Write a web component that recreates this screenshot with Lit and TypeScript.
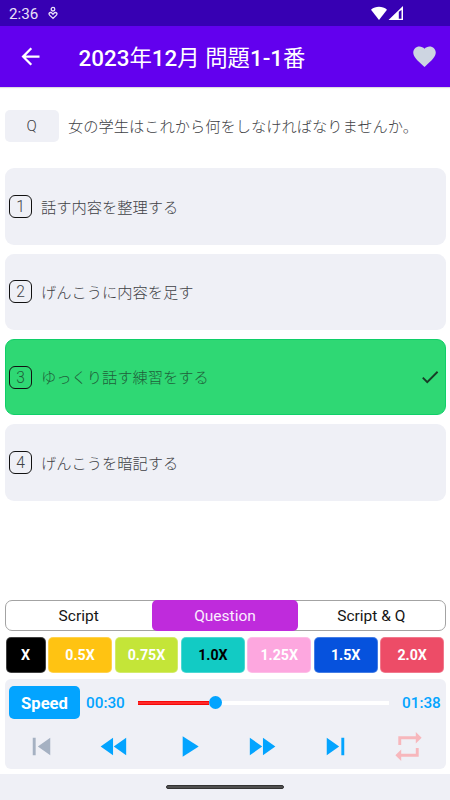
import { LitElement, html, css, svg } from "lit";
import { customElement, property, state } from "lit/decorators.js";
import { classMap } from "lit/directives/class-map.js";

const paths: Record<string, string> = {
  back: "M20 11H7.83l5.59-5.59L12 4l-8 8 8 8 1.41-1.41L7.83 13H20v-2z",
  heart:
    "M12 21.35l-1.45-1.32C5.4 15.36 2 12.28 2 8.5 2 5.42 4.42 3 7.5 3c1.74 0 3.41.81 4.5 2.09C13.09 3.81 14.76 3 16.5 3 19.58 3 22 5.42 22 8.5c0 3.78-3.4 6.86-8.55 11.54L12 21.35z",
  check: "M9 16.17L4.83 12l-1.42 1.41L9 19 21 7l-1.41-1.41z",
  prev: "M6 6h2v12H6zm3.5 6l8.5 6V6z",
  rewind: "M11 18V6l-8.5 6 8.5 6zm.5-6l8.5 6V6l-8.5 6z",
  play: "M8 5v14l11-7z",
  forward: "M4 18l8.5-6L4 6v12zm9-12v12l8.5-6L13 6z",
  next: "M6 18l8.5-6L6 6v12zM16 6v12h2V6h-2z",
  repeat:
    "M7 7h10v3l4-4-4-4v3H5v6h2V7zm10 10H7v-3l-4 4 4 4v-3h12v-6h-2v4z",
};

@customElement("app-icon")
class AppIcon extends LitElement {
  @property() name = "";
  static styles = css`
    :host { display: block; flex: none; }
    svg { display: block; width: 100%; height: 100%; fill: currentColor; }
  `;
  render() {
    return html`<svg viewBox="0 0 24 24">${svg`<path d=${paths[this.name] ?? ""}></path>`}</svg>`;
  }
}

@customElement("status-bar")
class StatusBar extends LitElement {
  static styles = css`
    :host {
      display: flex; align-items: center; height: 26px; box-sizing: border-box;
      padding: 0 46px 0 9px; background: #3700b3; color: #fff; flex: none;
    }
    .clock { font-size: 15.2px; line-height: 18px; padding-top: 2px; width: 31px; white-space: nowrap; color: #e9e2f8; }
    .person { width: 10px; height: 14px; margin-left: 8px; }
    .signals { width: 34px; height: 16px; margin-left: auto; }
    svg { display: block; }
  `;
  render() {
    return html`
      <span class="clock">2:36</span>
      <svg class="person" viewBox="0 0 10 14" fill="none" stroke="#e9e2f8" stroke-width="1.3">
        <circle cx="5" cy="3.2" r="1.8"></circle>
        <path d="M5 12.4L1.6 9.1C.3 7.6 1.5 6.3 2.8 6.5c1 .2 1.5 1 2.2 1.8.7-.8 1.2-1.6 2.2-1.8 1.3-.2 2.5 1.1 1.2 2.6z"></path>
      </svg>
      <svg class="signals" viewBox="0 0 34 16">
        <path fill="#fff" d="M1 4.7C5.6.9 12.4.9 17 4.7L9 15z"></path>
        <path fill="#fff" fill-rule="evenodd" d="M18.5 15L33 1v14zM28.8 6.7v7h2.7v-8.8z"></path>
      </svg>
    `;
  }
}

const options = ["話す内容を整理する", "げんこうに内容を足す", "ゆっくり話す練習をする", "げんこうを暗記する"];
const tabs = ["Script", "Question", "Script & Q"];
const speeds = [
  ["X", "black"], ["0.5X", "amber"], ["0.75X", "lime"], ["1.0X", "teal"],
  ["1.25X", "pink"], ["1.5X", "blue"], ["2.0X", "red"],
];

@customElement("app-root")
class AppRoot extends LitElement {
  @state() private tab = 1;
  @state() private selected = 2;

  static styles = css`
    :host {
      display: flex; flex-direction: column; width: 450px; height: 800px; overflow: hidden;
      background: #fff; font-family: Roboto, "Noto Sans CJK JP", sans-serif; color: #404145;
    }
    * { box-sizing: border-box; }
    .header {
      display: flex; align-items: center; height: 61px; flex: none; background: #6200ee; color: #fff;
      padding: 0 12.5px 0 16.5px; box-shadow: 0 1px 1px #dcdce0;
    }
    .back, .heart { width: 27px; height: 27px; }
    .heart { margin-left: auto; color: #cdd5e1; }
    .title { margin: 0 0 0 35px; font-size: 22.4px; font-weight: 500; line-height: 30px; white-space: nowrap; padding-top: 2px; }
    .title .kanji { font-weight: 400; }
    .question { display: flex; align-items: center; margin: 22.5px 4.5px 0; gap: 9px; height: 32.5px; flex: none; }
    .badge {
      width: 54.5px; height: 100%; border-radius: 5px; background: #eff0f6; flex: none;
      display: flex; align-items: center; justify-content: center; font-size: 15.2px; padding-top: 1px; font-weight: 300;
    }
    .prompt, .label { font-size: 15.25px; line-height: 22px; font-weight: 300; white-space: nowrap; padding-top: 2.4px; }
    .prompt { padding-top: 2px; }
    .options { display: flex; flex-direction: column; gap: 9px; margin: 26.4px 4.5px 0; flex: none; }
    .option {
      display: flex; align-items: center; height: 76.3px; border-radius: 9px; background: #eff0f6;
      padding: 0 5px 0 4.5px;
    }
    .option.correct { background: #2fd874; border: 1px solid #10cf68; padding: 0 4px 0 3.5px; color: #205f3a; }
    .num {
      width: 23px; height: 23px; border: 1px solid #111; border-radius: 6px; margin-right: 9px;
      display: flex; align-items: center; justify-content: center; font-size: 15.6px; font-weight: 300;
      padding-top: 1px; flex: none;
    }
    .check { width: 22px; height: 22px; margin-left: auto; color: #173c26; }
    .bottom { margin-top: auto; flex: none; padding: 0 4.5px 5px; }
    .tabs {
      display: grid; grid-template-columns: repeat(3, 1fr); height: 31px; border: 1px solid #a3a3a3;
      border-radius: 7px; background: #fff;
    }
    .tab { display: flex; align-items: center; justify-content: center; margin: -1px 0; font-size: 15.5px; color: #151515; padding-top: 1px; border-radius: 5px; }
    .tab.active { background: #bf2bdc; color: #fbeeff; }
    .speeds { display: grid; grid-template-columns: 40px repeat(6, 1fr); gap: 2.6px; margin: 5.5px 1.5px 0 1px; height: 36px; }
    .speed {
      display: flex; align-items: center; justify-content: center; border-radius: 5px; padding-top: 1px;
      font-size: 14.2px; font-weight: 700; color: #fff; border: 1px solid rgba(255, 255, 255, 0.25);
    }
    .black { background: #000; }
    .amber { background: #ffc312; }
    .lime { background: #c4e538; }
    .teal { background: #12cbc4; color: #000; }
    .pink { background: #fda7df; }
    .blue { background: #0652dd; }
    .red { background: #ed4c67; }
    .player { margin-top: 6.5px; height: 90px; border-radius: 6px; background: #eff0f6; padding: 7px 4.5px 0; }
    .timeline { display: flex; align-items: center; height: 33px; color: #03a4ff; }
    .speed-btn {
      width: 71px; height: 33px; border-radius: 5px; background: #03a4ff; color: #fff; flex: none;
      display: flex; align-items: center; justify-content: center; font-size: 16.6px; font-weight: 700; padding-top: 2px;
    }
    .time { font-size: 15.3px; font-weight: 500; width: 39px; line-height: 18px; white-space: nowrap; flex: none; }
    .time.now { margin-left: 6px; }
    .track { display: flex; align-items: center; flex: 1; margin: 0 13px; height: 14px; }
    .played { width: 71px; height: 4px; background: #ff2a2a; border: solid #f60808; border-width: 1px 0; }
    .thumb { width: 13px; height: 13px; border-radius: 50%; background: #03a4ff; }
    .rest { flex: 1; height: 4px; background: #fff; }
    .controls { display: grid; grid-template-columns: repeat(6, 1fr); justify-items: center; margin: 9.5px -4.5px 0; color: #03a4ff; }
    .control { width: 35px; height: 35px; }
    .control.prev { color: #a5b1c2; }
    .control.repeat { color: #f7b7bc; }
    .nav { height: 26px; background: #eff0f6; flex: none; display: flex; justify-content: center; padding-top: 11px; }
    .pill { width: 118px; height: 4px; border-radius: 2px; background: #505050; border: 1px solid #333; }
  `;

  render() {
    const controls = ["prev", "rewind", "play", "forward", "next", "repeat"];
    return html`
      <status-bar></status-bar>
      <header class="header">
        <app-icon class="back" name="back"></app-icon>
        <h1 class="title">2023<span class="kanji">年</span>12<span class="kanji">月 問題</span>1-1<span class="kanji">番</span></h1>
        <app-icon class="heart" name="heart"></app-icon>
      </header>
      <div class="question">
        <span class="badge">Q</span>
        <span class="prompt">女の学生はこれから何をしなければなりませんか。</span>
      </div>
      <div class="options">
        ${options.map((text, i) => html`
          <div class=${classMap({ option: true, correct: i === this.selected })} @click=${() => (this.selected = i)}>
            <span class="num">${i + 1}</span>
            <span class="label">${text}</span>
            ${i === this.selected ? html`<app-icon class="check" name="check"></app-icon>` : null}
          </div>`)}
      </div>
      <div class="bottom">
        <div class="tabs">
          ${tabs.map((t, i) => html`
            <div class=${classMap({ tab: true, active: i === this.tab })} @click=${() => (this.tab = i)}>${t}</div>`)}
        </div>
        <div class="speeds">
          ${speeds.map(([t, c]) => html`<div class="speed ${c}">${t}</div>`)}
        </div>
        <div class="player">
          <div class="timeline">
            <span class="speed-btn">Speed</span>
            <span class="time now">00:30</span>
            <div class="track">
              <div class="played"></div><div class="thumb"></div><div class="rest"></div>
            </div>
            <span class="time">01:38</span>
          </div>
          <div class="controls">
            ${controls.map((c) => html`<app-icon class="control ${c}" name=${c}></app-icon>`)}
          </div>
        </div>
      </div>
      <div class="nav"><div class="pill"></div></div>
    `;
  }
}
